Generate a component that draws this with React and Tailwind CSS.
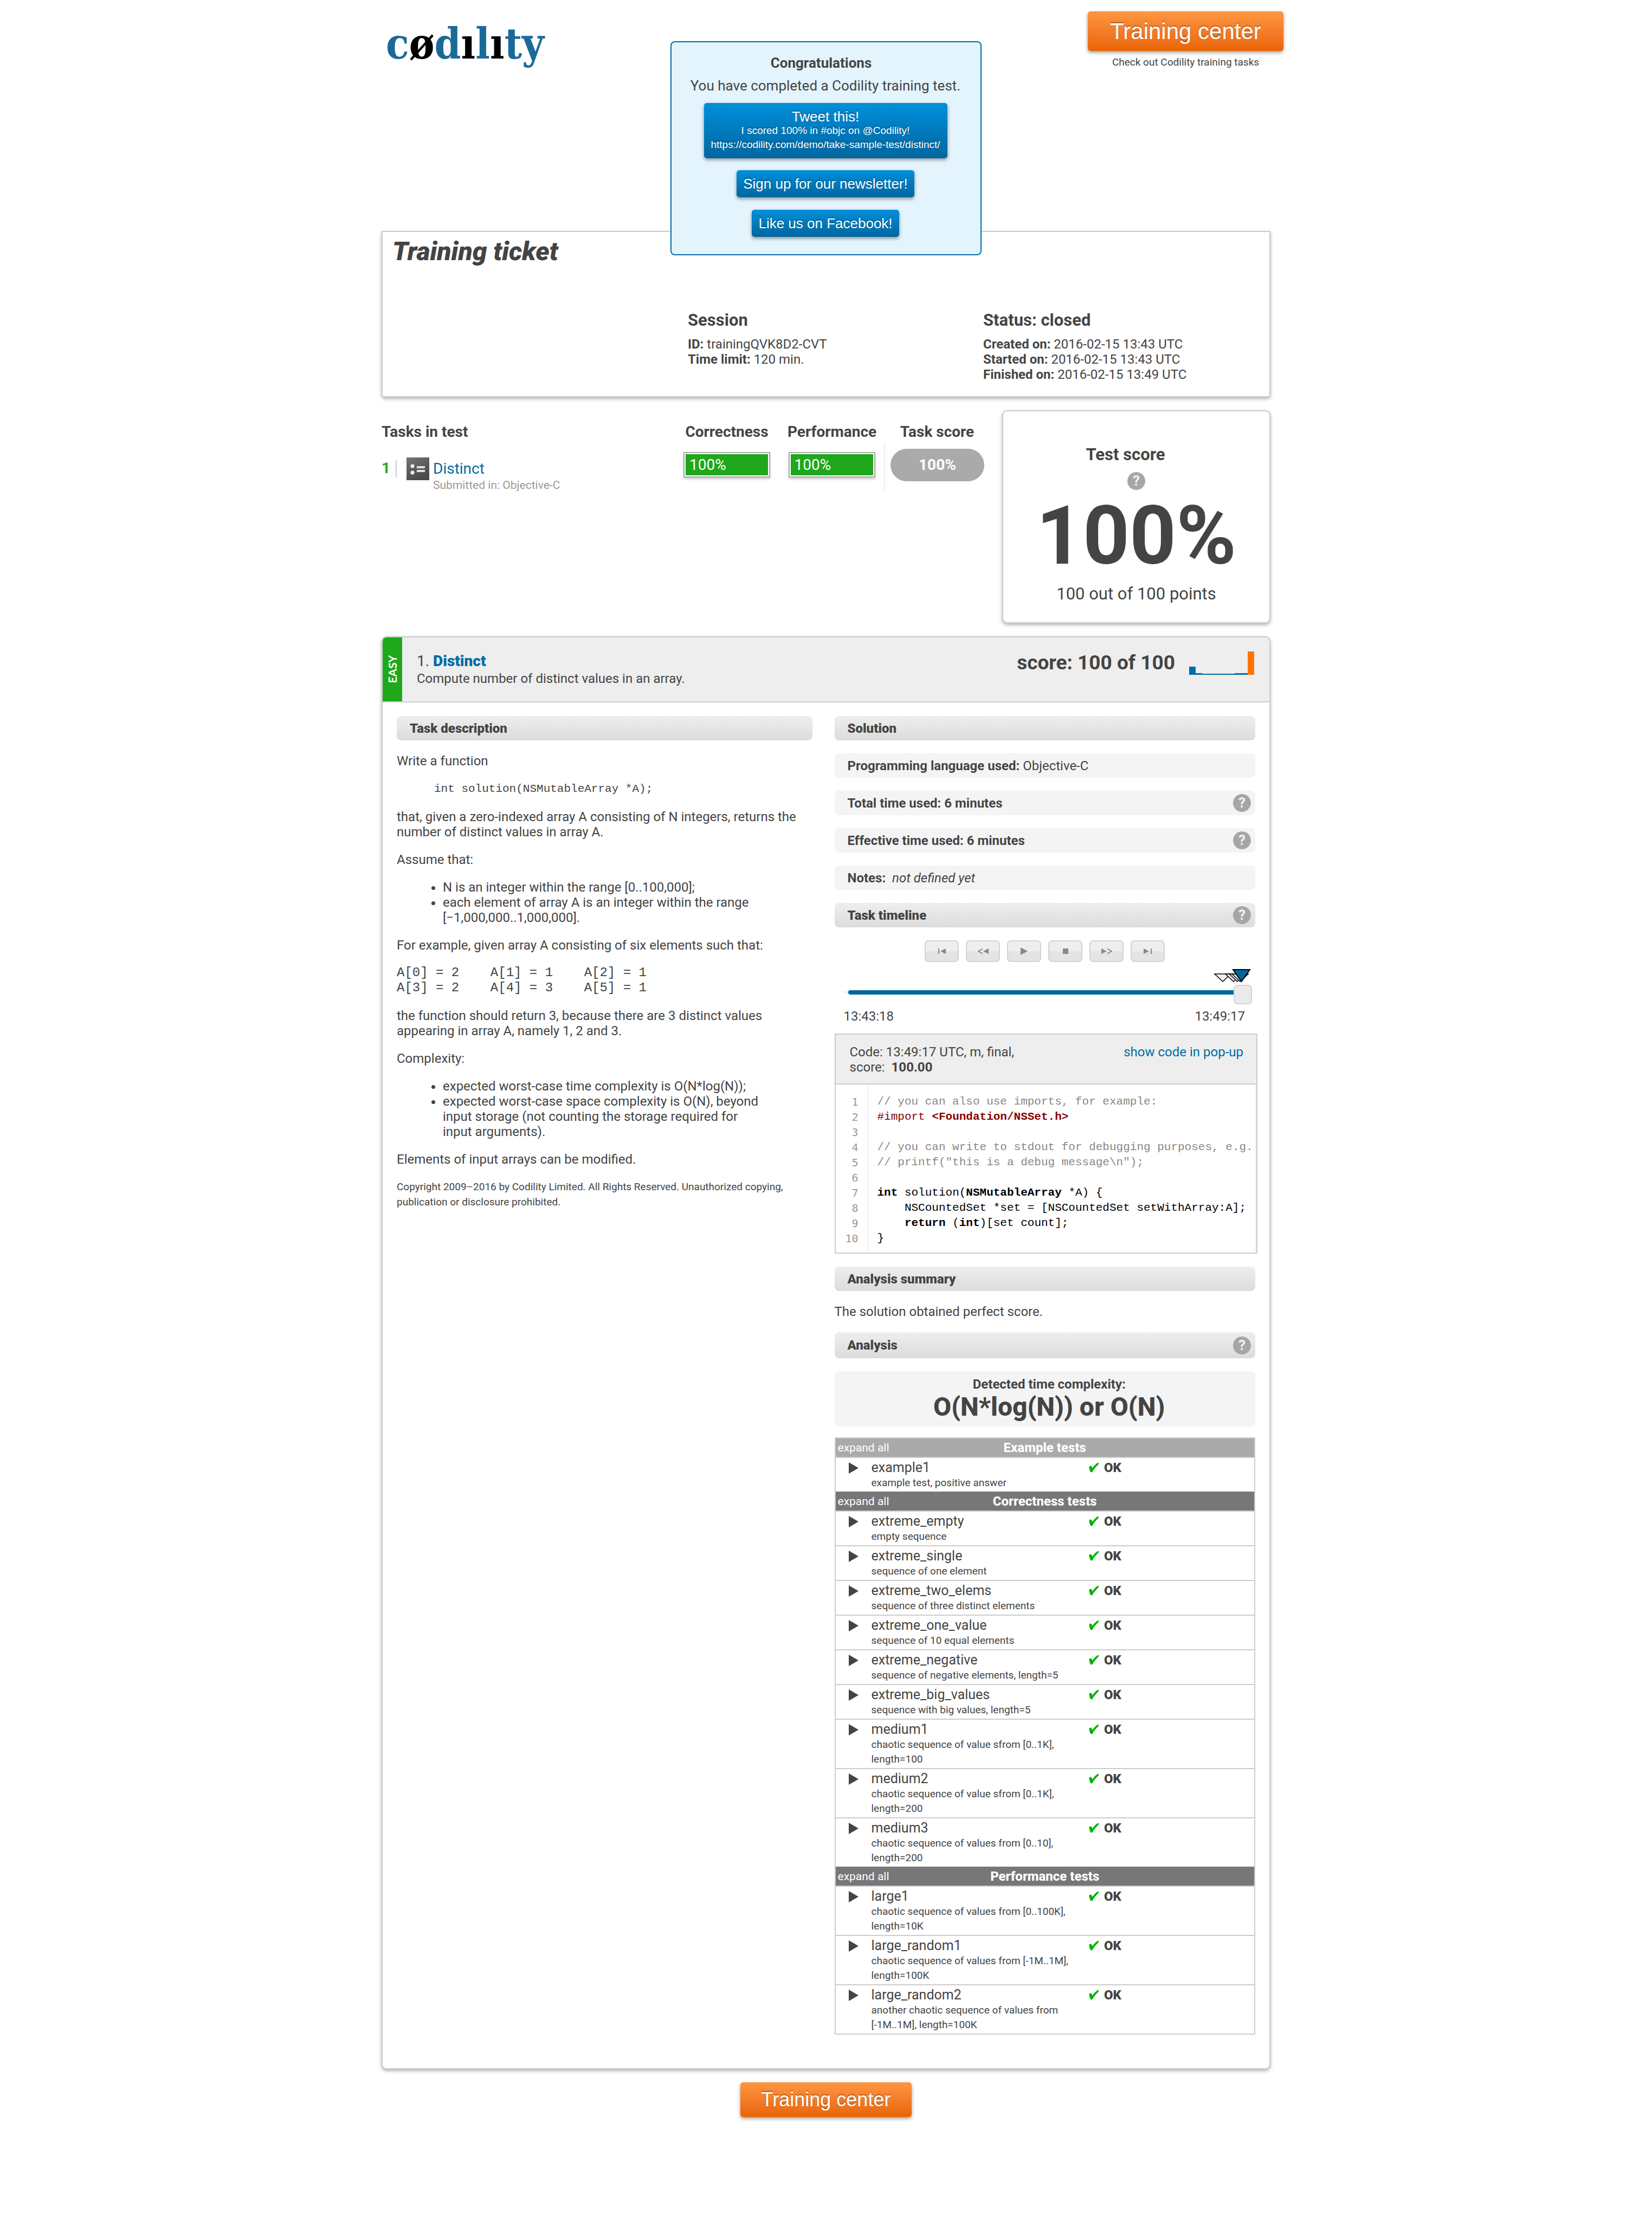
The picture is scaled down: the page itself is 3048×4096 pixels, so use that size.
import React from "react";

const shadow = "shadow-[0_3px_6px_rgba(0,0,0,0.3)]";

const exampleTests = [["example1", "example test, positive answer"]];
const correctnessTests = [
  ["extreme_empty", "empty sequence"],
  ["extreme_single", "sequence of one element"],
  ["extreme_two_elems", "sequence of three distinct elements"],
  ["extreme_one_value", "sequence of 10 equal elements"],
  ["extreme_negative", "sequence of negative elements, length=5"],
  ["extreme_big_values", "sequence with big values, length=5"],
  ["medium1", "chaotic sequence of value sfrom [0..1K], length=100"],
  ["medium2", "chaotic sequence of value sfrom [0..1K], length=200"],
  ["medium3", "chaotic sequence of values from [0..10], length=200"],
];
const performanceTests = [
  ["large1", "chaotic sequence of values from [0..100K], length=10K"],
  ["large_random1", "chaotic sequence of values from [-1M..1M], length=100K"],
  ["large_random2", "another chaotic sequence of values from [-1M..1M], length=100K"],
];

function Help({ label }) {
  return (
    <button
      type="button"
      aria-label={label}
      className="flex h-[33px] w-[33px] shrink-0 items-center justify-center rounded-full bg-[#a6a6a6] text-[26px] leading-[33px] font-bold text-[#f2f2f2]"
    >
      ?
    </button>
  );
}

function SectionBar({ children, help, tall }) {
  return (
    <div
      className={`flex items-center justify-between rounded-lg bg-linear-to-b from-[#eeeeee] to-[#dcdcdc] pr-2 pl-6 ${tall ? "h-12" : "h-[45px]"}`}
    >
      <h3 className="font-black">{children}</h3>
      {help && <Help label={help} />}
    </div>
  );
}

function InfoRow({ children, help }) {
  return (
    <div className="flex h-[45px] items-center justify-between rounded-lg bg-[#f4f4f4] pr-2 pl-6">
      <p>{children}</p>
      {help && <Help label={help} />}
    </div>
  );
}

function BlueButton({ children, className }) {
  return (
    <a
      href="#share"
      className={`block rounded-[5px] bg-linear-to-b from-[#0090dc] to-[#00669f] text-center font-['Liberation_Sans',sans-serif] text-[26px] leading-[26px] text-white shadow-[0_3px_6px_rgba(0,0,0,0.4)] text-shadow-[0_-2px_2px_rgba(0,0,0,0.3)] ${className}`}
    >
      {children}
    </a>
  );
}

function OrangeButton({ className }) {
  return (
    <a
      href="#training"
      className={`flex items-center justify-center rounded-[5px] bg-linear-to-b from-[#ff9640] to-[#e86400] font-['Liberation_Sans',sans-serif] text-white shadow-[0_3px_6px_rgba(0,0,0,0.4)] text-shadow-[0_-2px_2px_rgba(0,0,0,0.3)] ${className}`}
    >
      Training center
    </a>
  );
}

function Congratulations() {
  return (
    <aside className="absolute top-[76px] left-1/2 flex w-[574px] -translate-x-1/2 flex-col items-center rounded-lg border-2 border-[#006ca5] bg-[#e3f4fd] pt-5 pr-0.5 pb-8">
      <h2 className="pr-4 text-[26px] leading-9 font-bold">Congratulations</h2>
      <p className="mt-1.5 mb-3.5 text-[26px] leading-9">You have completed a Codility training test.</p>
      <BlueButton className="w-[449px] pt-3 pb-3">
        Tweet this!
        <span className="block text-[19px]">I scored 100% in #objc on @Codility!</span>
        <span className="block text-[19px]">https://codility.com/demo/take-sample-test/distinct/</span>
      </BlueButton>
      <BlueButton className="mt-[22px] px-3 py-3">Sign up for our newsletter!</BlueButton>
      <BlueButton className="mt-[23px] px-3 py-3">Like us on Facebook!</BlueButton>
    </aside>
  );
}

function ScoreBar() {
  return (
    <div className="mx-auto h-[47px] w-[160px] border-2 border-[#aaaaaa] bg-white p-0.5 shadow-[0_3px_4px_rgba(0,0,0,0.2)]">
      <div className="flex h-full items-center bg-[#1fa81b] pl-[7px] text-[28px] text-white">100%</div>
    </div>
  );
}

function TasksTable() {
  return (
    <table className="mt-[21px] w-full table-fixed">
      <colgroup>
        <col />
        <col className="w-[194px]" />
        <col className="w-[194px]" />
        <col className="w-[194px]" />
      </colgroup>
      <thead>
        <tr className="h-[38px] text-[28px] leading-[38px]">
          <th className="text-left">Tasks in test</th>
          <th>Correctness</th>
          <th>Performance</th>
          <th>Task score</th>
        </tr>
      </thead>
      <tbody>
        <tr className="h-[83px]">
          <td className="pt-7 align-top">
            <div className="flex">
              <div className="mt-1 h-8 w-7 border-r-2 border-[#cccccc] text-[28px] leading-8 font-bold text-[#1fa81b]">1</div>
              <svg viewBox="0 0 42 42" className="ml-[18px] h-[42px] w-[42px]" aria-hidden="true">
                <defs>
                  <linearGradient id="doc" x1="0" y1="0" x2="0.6" y2="1">
                    <stop offset="0" stopColor="#757575" />
                    <stop offset="1" stopColor="#484848" />
                  </linearGradient>
                </defs>
                <rect width="42" height="42" fill="url(#doc)" />
                <circle cx="11" cy="16" r="3.5" fill="#f2efed" />
                <circle cx="11" cy="28" r="3.5" fill="#f2efed" />
                <rect x="19" y="16" width="15" height="4" fill="#e4e0de" />
                <rect x="19" y="23" width="15" height="4" fill="#e4e0de" />
              </svg>
              <div className="ml-[7px]">
                <a href="#distinct" className="block text-[28px] leading-[41px] text-[#006ca5]">Distinct</a>
                <p className="text-[21px] leading-5 text-[#999999]">Submitted in: Objective-C</p>
              </div>
            </div>
          </td>
          <td className="pb-1.5"><ScoreBar /></td>
          <td className="pb-1.5"><ScoreBar /></td>
          <td className="border-l-2 border-[#eeeeee] pb-1.5">
            <div className="mx-auto flex h-[60px] w-[173px] items-center justify-center rounded-full bg-[#aaaaaa] text-[28px] font-bold text-white">
              100%
            </div>
          </td>
        </tr>
      </tbody>
    </table>
  );
}

function TaskDescription() {
  return (
    <div className="flex flex-col gap-[23px] leading-7">
      <SectionBar>Task description</SectionBar>
      <p className="pt-px">Write a function</p>
      <pre className="pt-px pl-[69px] font-['Liberation_Mono',monospace] text-[21px]">int solution(NSMutableArray *A);</pre>
      <p>that, given a zero-indexed array A consisting of N integers, returns the number of distinct values in array A.</p>
      <p>Assume that:</p>
      <ul className="list-disc pr-20 pl-[85px]">
        <li>N is an integer within the range [0..100,000];</li>
        <li>each element of array A is an integer within the range [−1,000,000..1,000,000].</li>
      </ul>
      <p>For example, given array A consisting of six elements such that:</p>
      <pre className="font-['Liberation_Mono',monospace]">{"A[0] = 2    A[1] = 1    A[2] = 1\nA[3] = 2    A[4] = 3    A[5] = 1"}</pre>
      <p className="pr-16">the function should return 3, because there are 3 distinct values appearing in array A, namely 1, 2 and 3.</p>
      <p>Complexity:</p>
      <ul className="list-disc pr-20 pl-[85px]">
        <li>expected worst-case time complexity is O(N*log(N));</li>
        <li>expected worst-case space complexity is O(N), beyond input storage (not counting the storage required for input arguments).</li>
      </ul>
      <p>Elements of input arrays can be modified.</p>
      <p className="text-[19px]">
        Copyright 2009–2016 by Codility Limited. All Rights Reserved. Unauthorized copying, publication or disclosure prohibited.
      </p>
    </div>
  );
}

const playerIcons = [
  ["First", <><rect x="1" y="2" width="2" height="10" /><path d="M15 2v10L5 7z" /></>],
  ["Back", <><path d="M20 2v10L10 7z" /><path d="M9 2.500L1 7l8 4.500" fill="none" stroke="currentColor" strokeWidth="2" /></>],
  ["Play", <path d="M1 0v14l13-7z" />],
  ["Stop", <rect x="0" y="2" width="10" height="10" />],
  ["Forward", <><path d="M0 2v10l10-5z" /><path d="M11 2.500L19 7l-8 4.500" fill="none" stroke="currentColor" strokeWidth="2" /></>],
  ["Last", <><path d="M0 2v10l10-5z" /><rect x="13" y="2" width="2" height="10" /></>],
];
const playerWidths = [16, 20, 15, 10, 20, 16];

function Timeline() {
  return (
    <div className="-mb-1.5">
      <div className="flex justify-center gap-[13px]">
        {playerIcons.map(([label, icon], i) => (
          <button
            key={label}
            type="button"
            aria-label={label}
            className="flex h-10 w-[63px] items-center justify-center rounded-[7px] border-2 border-[#d3d3d3] bg-linear-to-b from-[#eeeeee] from-50% to-[#e4e4e4] to-50% text-[#888888]"
          >
            <svg width={playerWidths[i]} height="14" viewBox={`0 0 ${playerWidths[i]} 14`} fill="currentColor">{icon}</svg>
          </button>
        ))}
      </div>
      <div className="mt-3 flex justify-end pr-2">
        <svg width="70" height="26" viewBox="0 0 70 26" aria-hidden="true" stroke="#000000" strokeWidth="1.500">
          <g fill="#eeeeee">
            <path d="M3 10h30L18 24z" />
            <path d="M23 10h30L38 24z" />
            <path d="M30 10h30L45 24z" />
            <path d="M35 10h30L50 24z" />
          </g>
          <path d="M37 2h31L52.500 24z" fill="#00669c" strokeWidth="2" />
        </svg>
      </div>
      <div className="mt-1 flex items-center pr-1.5 pl-[17px]">
        <span className="mb-2 h-1 w-2 bg-[#eeeeee]" />
        <input
          type="range"
          aria-label="Task timeline"
          defaultValue="100"
          className="h-9 min-w-0 flex-1 appearance-none bg-transparent [&::-webkit-slider-runnable-track]:mb-2 [&::-webkit-slider-runnable-track]:h-2 [&::-webkit-slider-runnable-track]:rounded-l-full [&::-webkit-slider-runnable-track]:bg-[#00669c] [&::-webkit-slider-thumb]:-mt-2.5 [&::-webkit-slider-thumb]:h-9 [&::-webkit-slider-thumb]:w-[34px] [&::-webkit-slider-thumb]:appearance-none [&::-webkit-slider-thumb]:rounded-[7px] [&::-webkit-slider-thumb]:border-2 [&::-webkit-slider-thumb]:border-[#d3d3d3] [&::-webkit-slider-thumb]:bg-[#eaeaea]"
        />
      </div>
      <div className="mt-2 flex justify-between pr-[19px] pl-[17px] leading-7">
        <span>13:43:18</span>
        <span>13:49:17</span>
      </div>
    </div>
  );
}

function CodeLine({ number, children }) {
  return (
    <div className="flex h-7">
      <span className="w-[60px] shrink-0 border-r-2 border-[#eeeeee] pr-4 text-right font-['DejaVu_Sans_Mono',monospace] text-[20px] text-[#999999]">
        {number}
      </span>
      <code className="flex pl-[17px] font-['Liberation_Mono',monospace] text-[21px] whitespace-pre text-black">
        {children}
      </code>
    </div>
  );
}

function CodeBox() {
  return (
    <section className="-mr-1 border-2 border-[#cccccc]">
      <header className="flex items-start justify-between border-b-2 border-[#cccccc] bg-[#eeeeee] pt-[18px] pr-6 pb-4 pl-[26px] leading-7">
        <div>
          <p>Code: 13:49:17 UTC, m, final,</p>
          <p className="flex gap-3"><span>score:</span><b>100.00</b></p>
        </div>
        <a href="#code" className="text-[#006ca5]">show code in pop-up</a>
      </header>
      <div className="border-r-2 border-[#eeeeee] leading-7">
        <div className="h-[18px] w-[60px] border-r-2 border-[#eeeeee]" />
        <CodeLine number="1"><span className="text-[#888888]">// you can also use imports, for example:</span></CodeLine>
        <CodeLine number="2">
          <span className="text-[#880000]">{"#import "}</span>
          <b className="text-[#880000]">{"<Foundation/NSSet.h>"}</b>
        </CodeLine>
        <CodeLine number="3" />
        <CodeLine number="4"><span className="text-[#888888]">// you can write to stdout for debugging purposes, e.g.</span></CodeLine>
        <CodeLine number="5"><span className="text-[#888888]">{"// printf(\"this is a debug message\\n\");"}</span></CodeLine>
        <CodeLine number="6" />
        <CodeLine number="7">
          <b>int</b>
          <span>{" solution("}</span>
          <b>NSMutableArray</b>
          <span>{" *A) {"}</span>
        </CodeLine>
        <CodeLine number="8"><span>{"    NSCountedSet *set = [NSCountedSet setWithArray:A];"}</span></CodeLine>
        <CodeLine number="9">
          <b>{"    return"}</b>
          <span>{" ("}</span>
          <b>int</b>
          <span>{")[set count];"}</span>
        </CodeLine>
        <CodeLine number="10"><span>{"}"}</span></CodeLine>
        <div className="h-3 w-[60px] border-r-2 border-[#eeeeee]" />
      </div>
    </section>
  );
}

function TestGroup({ title, tests, light }) {
  return (
    <tbody>
      <tr className={`h-9 border-b-2 border-[#cccccc] text-white ${light ? "bg-[#aaaaaa]" : "bg-[#777777]"}`}>
        <th colSpan={3} className="p-0 font-normal">
          <div className="grid grid-cols-[1fr_auto_1fr] leading-[34px]">
            <a href="#expand" className="pl-1 text-left text-[21px]">expand all</a>
            <span className="font-extrabold">{title}</span>
          </div>
        </th>
      </tr>
      {tests.map(([name, text]) => (
        <tr key={name} className="border-b-2 border-[#cccccc] align-top last:border-b-0">
          <td className="pt-2 pl-6">
            <button type="button" aria-label={`Expand ${name}`} className="block">
              <svg width="18" height="21" viewBox="0 0 18 21" fill="#444444"><path d="M0 0v21l18-10.500z" /></svg>
            </button>
          </td>
          <td className="pt-1 pb-[3px]">
            <p className="text-[25px] leading-7">{name}</p>
            <p className="text-[19px] leading-[27px]">{text}</p>
          </td>
          <td className="pt-1">
            <div className="flex items-center gap-[9px] leading-7 font-black">
              <svg width="19" height="20" viewBox="0 0 18 19" fill="#00b200" aria-hidden="true">
                <path d="M0.500 8.500C0.500 6 3 5.500 4.300 6.700C5.400 7.700 5.600 9.300 6 10.500C8.800 6.500 12 2.800 16.500 0.300C17.300 1.300 17.200 3 16.500 4C12.500 7.500 8.800 12 6 17C3.500 18 2.300 17 1.800 14.500C1.400 12.500 0.600 10.500 0.500 8.500Z" />
              </svg>
              OK
            </div>
          </td>
        </tr>
      ))}
    </tbody>
  );
}

const chart = [15, 3, 2, 2, 2, 2, 2, 3, 3, 43];

export default function App() {
  return (
    <div className="min-h-screen bg-white px-6 font-[Roboto,sans-serif] text-[24px] text-[#444444]">
      <main className="relative mx-auto w-full max-w-[1640px] pb-20">
        <header className="flex h-[426px] items-start justify-between pt-[21px] pl-2">
          <a href="#home" aria-label="Codility" className="font-['DejaVu_Serif_Condensed','DejaVu_Serif',serif] text-[78px] leading-[120px] font-bold text-[#1a6a98]">
            c<span className="text-black">ø</span>d<span className="text-black">ı</span>l<span className="text-black">ı</span>ty
          </a>
          <div className="-mr-6 w-[361px] text-center">
            <OrangeButton className="h-[73px] text-[42px]" />
            <p className="mt-1.5 text-[19px] leading-[30px]">Check out Codility training tasks</p>
          </div>
        </header>

        <section className={`rounded-b-[5px] border-2 border-[#cccccc] bg-white pb-[26px] ${shadow}`}>
          <h1 className="pt-1.5 pl-[18px] text-[48px] leading-[60px] font-black italic">Training ticket</h1>
          <div className="mt-[79px] grid grid-cols-[563fr_545fr_528fr] leading-7">
            <div />
            <div>
              <h2 className="mb-3 text-[31px] leading-9 font-bold">Session</h2>
              <p><b>ID:</b> trainingQVK8D2-CVT</p>
              <p><b>Time limit:</b> 120 min.</p>
            </div>
            <div>
              <h2 className="mb-3 text-[31px] leading-9 font-bold">Status: closed</h2>
              <p><b>Created on:</b> 2016-02-15 13:43 UTC</p>
              <p><b>Started on:</b> 2016-02-15 13:43 UTC</p>
              <p><b>Finished on:</b> 2016-02-15 13:49 UTC</p>
            </div>
          </div>
        </section>

        <Congratulations />

        <section className="mt-6 grid grid-cols-[1122fr_495fr] items-start gap-[23px]">
          <TasksTable />
          <div className={`flex h-[393px] flex-col items-center rounded-[9px] border-2 border-[#cccccc] bg-white pt-[60px] ${shadow}`}>
            <h2 className="pr-10 text-[31px] leading-10 font-bold">Test score</h2>
            <div className="mt-3"><Help label="About the test score" /></div>
            <p className="mt-2.5 text-[150px] leading-[150px] font-bold">100%</p>
            <p className="mt-3 text-[31px] leading-10">100 out of 100 points</p>
          </div>
        </section>

        <section className={`mt-6 rounded-[9px] border-2 border-[#cccccc] bg-white pb-[62px] ${shadow}`}>
          <header className="flex h-[120px] overflow-hidden rounded-t-[7px] border-b-2 border-[#cccccc] bg-[#eeeeee]">
            <div className="flex w-9 items-center justify-center bg-[#1fa81b]">
              <span className="rotate-180 font-[Lato,sans-serif] text-[21px] leading-9 font-bold text-white [writing-mode:vertical-rl]">EASY</span>
            </div>
            <div className="flex flex-1 items-start justify-between pt-[26px] pr-7 pl-[27px]">
              <div>
                <h2 className="text-[28px] leading-9">1. <a href="#distinct" className="font-black text-[#006ca5]">Distinct</a></h2>
                <p className="leading-7">Compute number of distinct values in an array.</p>
              </div>
              <div className="flex items-start gap-[26px]">
                <p className="text-[37px] leading-[42px] font-bold">score: 100 of 100</p>
                <svg width="120" height="43" viewBox="0 0 120 43" role="img" aria-label="Score distribution">
                  {chart.map((h, i) => (
                    <rect key={i} x={i * 12} y={43 - h} width="12" height={h} fill={i === 9 ? "#ff7300" : "#006ca5"} />
                  ))}
                </svg>
              </div>
            </div>
          </header>
          <div className="grid grid-cols-[767fr_777fr] gap-[41px] px-[26px] pt-[25px]">
            <TaskDescription />
            <div className="flex flex-col gap-6">
              <SectionBar>Solution</SectionBar>
              <InfoRow><b>Programming language used:</b> Objective-C</InfoRow>
              <InfoRow help="About total time"><b>Total time used: 6 minutes</b></InfoRow>
              <InfoRow help="About effective time"><b>Effective time used: 6 minutes</b></InfoRow>
              <InfoRow><b>Notes:</b>&nbsp; <i>not defined yet</i></InfoRow>
              <SectionBar help="About the task timeline">Task timeline</SectionBar>
              <Timeline />
              <CodeBox />
              <SectionBar>Analysis summary</SectionBar>
              <p className="leading-7">The solution obtained perfect score.</p>
              <SectionBar help="About the analysis" tall>Analysis</SectionBar>
              <div className="rounded-lg bg-[#f4f4f4] pt-2.5 pb-2 pl-4 text-center font-bold">
                <p className="leading-7">Detected time complexity:</p>
                <p className="text-[48px] leading-14 font-extrabold">O(N*log(N)) or O(N)</p>
              </div>
              <table className="-mt-1 w-full table-fixed border-collapse border-2 border-[#cccccc]">
                <colgroup>
                  <col className="w-[67px]" />
                  <col />
                  <col className="w-[306px]" />
                </colgroup>
                <TestGroup title="Example tests" tests={exampleTests} light />
                <TestGroup title="Correctness tests" tests={correctnessTests} />
                <TestGroup title="Performance tests" tests={performanceTests} />
              </table>
            </div>
          </div>
        </section>

        <footer className="mt-6 flex justify-center">
          <OrangeButton className="h-16 w-[316px] text-[36px]" />
        </footer>
      </main>
    </div>
  );
}
